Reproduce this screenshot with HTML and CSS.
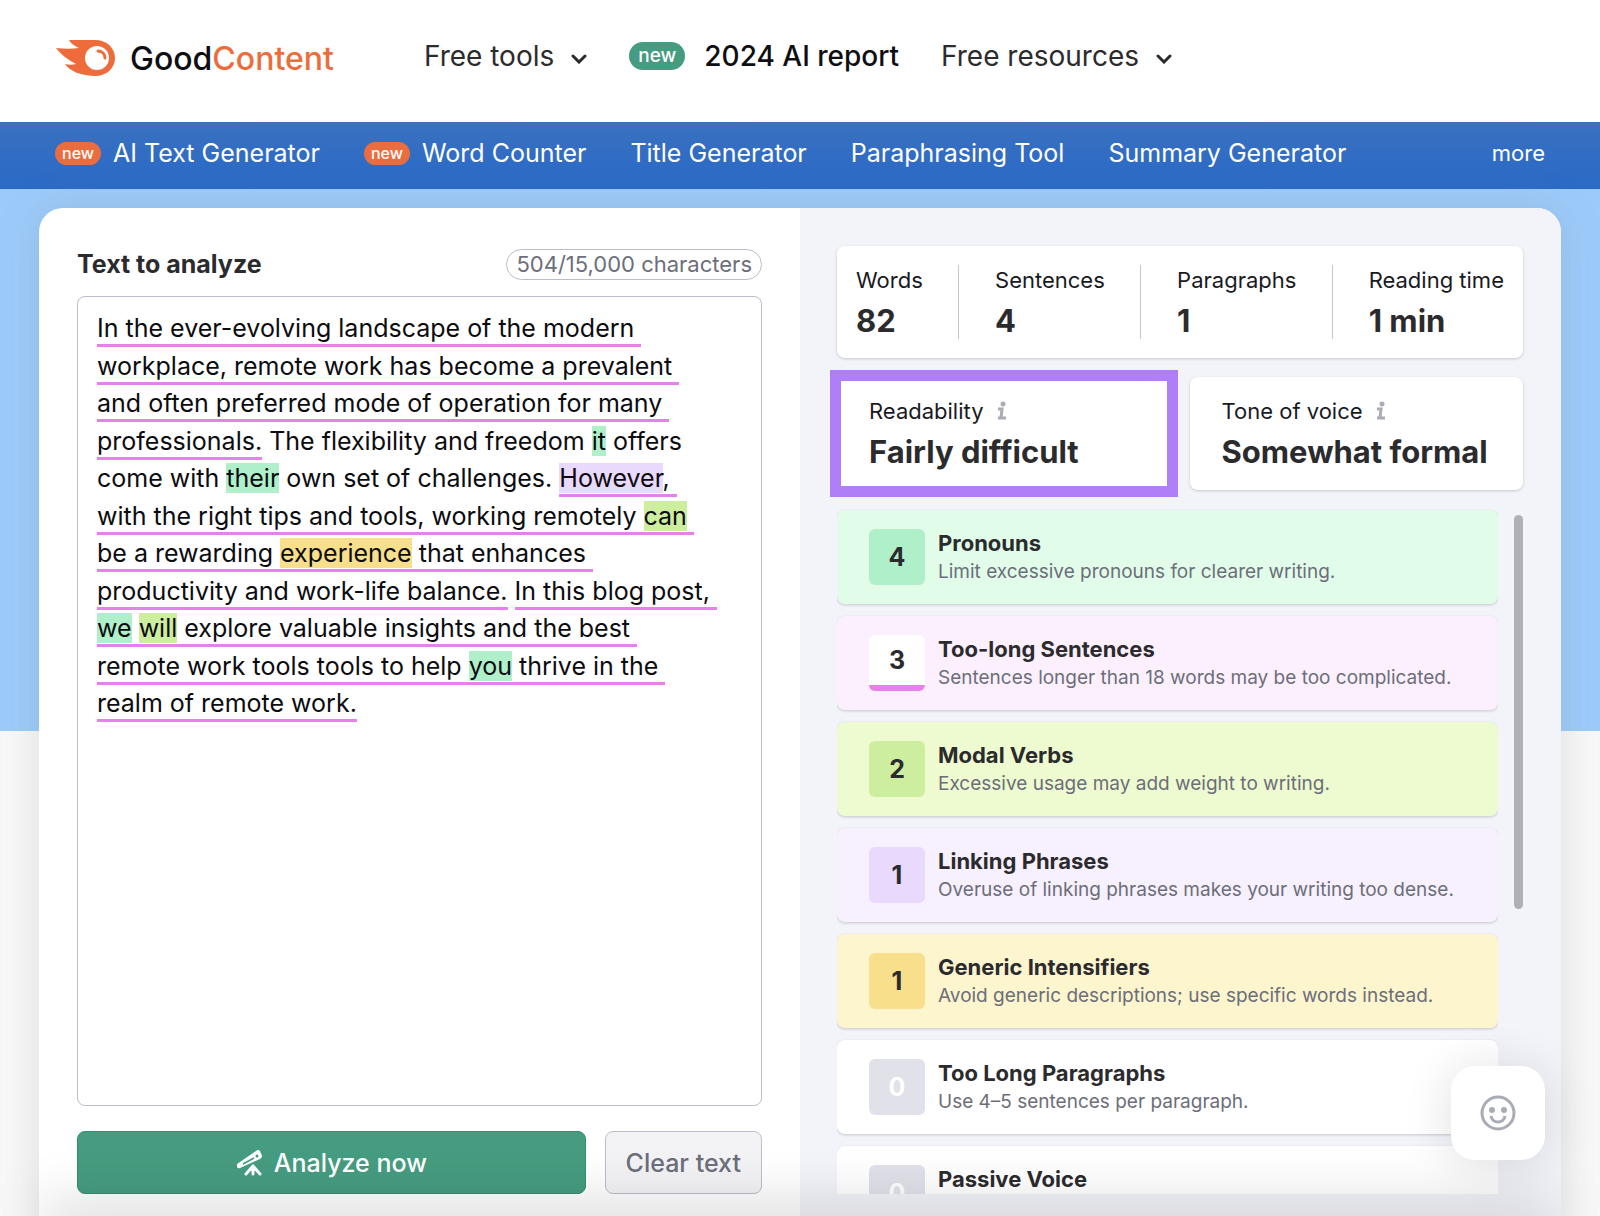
FILE: index.html
```html
<!DOCTYPE html>
<html lang="en">
<head>
  <meta charset="UTF-8">
  <meta name="viewport" content="width=device-width, initial-scale=1.0">
  <title>GoodContent</title>
  <link rel="stylesheet" href="styles.css">
</head>
<body>
  <header class="header">
    <a class="logo" href="#">
      <svg class="logo-icon" width="60" height="36" viewBox="0 0 60 36" aria-hidden="true">
        <path fill="#ee6c3c" d="M13 0H39C51 0 59 8 59 18S51 36 39 36C26 36 13 31 9 24C13 25 17 25 20 24C13 20 6 16 0 8C8 9 16 9 23 8C19 6 15 4 13 0Z"/>
        <circle cx="41" cy="18" r="12" fill="#fff"/>
        <path fill="none" stroke="#ee6c3c" stroke-width="3" stroke-linecap="round" d="M42 11C46 11 49 14 49 18"/>
      </svg>
      <span class="logo-text">Good<span>Content</span></span>
    </a>
    <nav class="main-nav">
      <a href="#">Free tools
        <svg class="chevron" width="16" height="10" viewBox="0 0 16 10" aria-hidden="true"><path d="M2 2L8 8L14 2"/></svg>
      </a>
      <a class="report" href="#"><span class="badge badge-green">new</span>2024 AI report</a>
      <a href="#">Free resources
        <svg class="chevron" width="16" height="10" viewBox="0 0 16 10" aria-hidden="true"><path d="M2 2L8 8L14 2"/></svg>
      </a>
    </nav>
  </header>

  <nav class="tools-nav">
    <a href="#"><span class="badge badge-orange">new</span>AI Text Generator</a>
    <a href="#"><span class="badge badge-orange">new</span>Word Counter</a>
    <a href="#">Title Generator</a>
    <a href="#">Paraphrasing Tool</a>
    <a href="#">Summary Generator</a>
    <a class="more" href="#">more</a>
  </nav>

  <main class="page">
    <div class="panel">
      <section class="editor">
        <div class="editor-head">
          <h2 id="editor-label">Text to analyze</h2>
          <span class="counter">504/15,000 characters</span>
        </div>
        <div class="editor-text" contenteditable="true" role="textbox" aria-multiline="true" aria-labelledby="editor-label" spellcheck="false"><span class="long">In the ever-evolving landscape of the modern workplace, remote work has become a prevalent and often preferred mode of operation for many professionals.</span> The flexibility and freedom <mark class="pronoun">it</mark> offers come with <mark class="pronoun">their</mark> own set of challenges. <span class="long"><mark class="linking">However</mark>, with the right tips and tools, working remotely <mark class="modal">can</mark> be a rewarding <mark class="generic">experience</mark> that enhances productivity and work-life balance.</span> <span class="long">In this blog post, <mark class="pronoun">we</mark> <mark class="modal">will</mark> explore valuable insights and the best remote work tools tools to help <mark class="pronoun">you</mark> thrive in the realm of remote work.</span></div>
        <div class="actions">
          <button class="btn btn-analyze" type="button">
            <svg width="27" height="27" viewBox="0 0 27 27" aria-hidden="true">
              <path fill="#fff" d="M1 15L20 2Q22 0 24 2L26 7Q26 9 24 10L4 19Q2 20 1 18Z"/>
              <path stroke="#469c80" stroke-width="1.5" d="M7 15L18 9"/>
              <circle cx="21" cy="7" r="1.5" fill="#469c80"/>
              <path fill="none" stroke="#fff" stroke-width="3" stroke-linecap="round" d="M17 17L10 25M17 17L24 25M17 17V25"/>
            </svg>
            Analyze now
          </button>
          <button class="btn btn-clear" type="button">Clear text</button>
        </div>
      </section>

      <section class="results">
        <div class="card stats">
          <div><p>Words</p><strong>82</strong></div>
          <i class="divider"></i>
          <div><p>Sentences</p><strong>4</strong></div>
          <i class="divider"></i>
          <div><p>Paragraphs</p><strong>1</strong></div>
          <i class="divider"></i>
          <div><p>Reading time</p><strong>1 min</strong></div>
        </div>

        <div class="scores">
          <div class="card score selected">
            <p>Readability
              <svg class="info" width="12" height="20" viewBox="0 0 12 20" aria-hidden="true"><circle cx="7" cy="3" r="2.5"/><path d="M2 8H6L5 17M2 17H10"/></svg>
            </p>
            <strong>Fairly difficult</strong>
          </div>
          <div class="card score">
            <p>Tone of voice
              <svg class="info" width="12" height="20" viewBox="0 0 12 20" aria-hidden="true"><circle cx="7" cy="3" r="2.5"/><path d="M2 8H6L5 17M2 17H10"/></svg>
            </p>
            <strong>Somewhat formal</strong>
          </div>
        </div>

        <div class="issues">
          <ul class="issue-list">
            <li class="card issue issue-pronoun">
              <span class="count">4</span>
              <div><h3>Pronouns</h3><p>Limit excessive pronouns for clearer writing.</p></div>
            </li>
            <li class="card issue issue-long">
              <span class="count">3</span>
              <div><h3>Too-long Sentences</h3><p>Sentences longer than 18 words may be too complicated.</p></div>
            </li>
            <li class="card issue issue-modal">
              <span class="count">2</span>
              <div><h3>Modal Verbs</h3><p>Excessive usage may add weight to writing.</p></div>
            </li>
            <li class="card issue issue-linking">
              <span class="count">1</span>
              <div><h3>Linking Phrases</h3><p>Overuse of linking phrases makes your writing too dense.</p></div>
            </li>
            <li class="card issue issue-generic">
              <span class="count">1</span>
              <div><h3>Generic Intensifiers</h3><p>Avoid generic descriptions; use specific words instead.</p></div>
            </li>
            <li class="card issue">
              <span class="count">0</span>
              <div><h3>Too Long Paragraphs</h3><p>Use 4–5 sentences per paragraph.</p></div>
            </li>
            <li class="card issue">
              <span class="count">0</span>
              <div><h3>Passive Voice</h3></div>
            </li>
          </ul>
          <div class="scrollbar"><div class="thumb"></div></div>
        </div>
      </section>
    </div>
  </main>

  <div class="bottom-shade"></div>

  <button class="feedback" type="button" aria-label="Feedback">
    <svg width="36" height="36" viewBox="0 0 36 36" aria-hidden="true">
      <circle cx="18" cy="18" r="16" fill="none" stroke="#a9abb6" stroke-width="3"/>
      <circle cx="12" cy="15" r="3" fill="#a9abb6"/>
      <circle cx="24" cy="15" r="3" fill="#a9abb6"/>
      <path fill="none" stroke="#a9abb6" stroke-width="3" d="M11 21C12 29 24 29 25 21"/>
    </svg>
  </button>
</body>
</html>
```

FILE: styles.css
```css
* {
  box-sizing: border-box;
}
body {
  display: flex;
  flex-direction: column;
  height: 100vh;
  margin: 0;
  overflow: hidden;
  background: #fff;
  color: #2b2b2e;
  font-family: Inter, "Liberation Sans", sans-serif;
}
h2, h3, p, ul {
  margin: 0;
  padding: 0;
}
a {
  color: inherit;
  text-decoration: none;
}
button {
  font-family: inherit;
  cursor: pointer;
}

/* header */
.header {
  display: flex;
  align-items: center;
  gap: 90px;
  height: 122px;
  padding: 0 56px 10px;
}
.logo {
  display: flex;
  align-items: center;
  gap: 14px;
  padding-top: 4px;
}
.logo-text {
  color: #0e0f14;
  font-size: 32px;
  font-weight: 500;
}
.logo-text span {
  color: #ee6c3c;
}
.main-nav {
  display: flex;
  align-items: center;
  gap: 42px;
  color: #2b2b2e;
  font-size: 28px;
}
.main-nav a {
  display: flex;
  align-items: center;
  gap: 17px;
}
.main-nav .report {
  gap: 19px;
  color: #0e0f14;
  font-weight: 500;
}
.chevron {
  margin-top: 6px;
  fill: none;
  stroke: #2b2b2e;
  stroke-width: 3;
  stroke-linecap: round;
}
.badge {
  border-radius: 14px;
  color: #fff;
  font-weight: 500;
}
.badge-green {
  padding: 0 9px;
  background: #469c80;
  font-size: 19px;
  line-height: 28px;
}
.badge-orange {
  padding: 0 7px;
  background: #ea6d40;
  font-size: 16px;
  line-height: 23px;
}

/* blue bar */
.tools-nav {
  display: flex;
  align-items: center;
  gap: 44px;
  height: 67px;
  padding: 0 55px 5px;
  background: linear-gradient(#3b71be, #2f6cc5 60%, #2b6bc6);
  color: #fff;
  font-size: 25px;
}
.tools-nav a {
  display: flex;
  align-items: center;
  gap: 12px;
}
.tools-nav .more {
  margin-left: auto;
  font-size: 22px;
}

/* tool panel */
.page {
  display: flex;
  flex: 1;
  min-height: 0;
  padding: 19px 39px 0;
  background: linear-gradient(#9ccbfb 542px, #f8f8f8 542px);
}
.panel {
  display: grid;
  flex: 1;
  grid-template-columns: 1fr 1fr;
  min-width: 0;
  border-radius: 24px 24px 0 0;
  overflow: hidden;
  background: #fff;
  box-shadow: 0 0 40px rgba(130, 130, 130, 0.22);
}
.editor {
  display: flex;
  flex-direction: column;
  padding: 38px 38px 22px;
}
.editor-head {
  display: flex;
  align-items: center;
  justify-content: space-between;
  height: 36px;
  margin-bottom: 14px;
}
.editor-head h2 {
  font-size: 25px;
  font-weight: 700;
}
.counter {
  padding: 0 9px;
  border: 1px solid #bcbdca;
  border-radius: 16px;
  color: #6c6e79;
  font-size: 22px;
  line-height: 29px;
}
.editor-text {
  flex: 1;
  margin-bottom: 25px;
  padding: 13px 44px 13px 19px;
  border: 1px solid #bcbdca;
  border-radius: 8px;
  color: #0c0c10;
  font-size: 25px;
  line-height: 1.5;
  white-space: pre-wrap;
}
.long {
  padding-bottom: 1px;
  border-bottom: 3px solid #e681ec;
}
mark {
  color: inherit;
}
.pronoun {
  background: #aff0cb;
}
.linking {
  background: #e9d9fc;
}
.modal {
  background: #cded9f;
}
.generic {
  background: #f7df8c;
}
.actions {
  display: flex;
  gap: 19px;
}
.btn {
  display: flex;
  align-items: center;
  justify-content: center;
  gap: 11px;
  height: 63px;
  padding: 0 20px;
  border: 1px solid #bcbdca;
  border-radius: 8px;
  font-size: 25px;
  font-weight: 500;
}
.btn-analyze {
  flex: 1;
  border-color: #2f9070;
  background: #469c80;
  color: #fff;
}
.btn-clear {
  background: #f3f3f6;
  color: #6c6e79;
}

/* results */
.results {
  display: flex;
  flex-direction: column;
  gap: 19px;
  min-height: 0;
  padding: 38px 38px 22px 37px;
  background: #f3f4f9;
}
.card {
  border-radius: 8px;
  background: #fff;
  box-shadow: 0 1px 3px rgba(25, 27, 35, 0.2);
}
.card p {
  color: #191a1f;
  font-size: 22px;
  line-height: 30px;
}
.card strong {
  display: block;
  font-size: 31px;
  font-weight: 700;
  line-height: 40px;
}
.stats {
  display: flex;
  justify-content: space-between;
  padding: 19px;
}
.divider {
  width: 1px;
  background: #c4c7cf;
}
.stats > div {
  height: 74px;
}
.stats strong,
.score strong {
  margin-top: 6px;
}
.scores {
  display: grid;
  grid-template-columns: 1fr 1fr;
  gap: 19px;
}
.score {
  padding: 19px 32px 18px;
}
.score p {
  display: flex;
  align-items: center;
  gap: 12px;
}
.selected {
  outline: 11px solid #b07ff7;
  outline-offset: -4px;
  border-radius: 0;
}
.info {
  fill: #a9abb6;
}
.info path {
  fill: none;
  stroke: #a9abb6;
  stroke-width: 3;
}
.issues {
  display: flex;
  flex: 1;
  gap: 16px;
  min-height: 0;
}
.issue-list {
  display: flex;
  flex: 1;
  flex-direction: column;
  gap: 12px;
  padding-top: 1px;
  overflow: hidden;
  list-style: none;
}
.issue {
  display: flex;
  flex-shrink: 0;
  align-items: center;
  gap: 13px;
  height: 94px;
  padding: 0 32px;
}
.issue > div {
  height: 58px;
}
.issue h3 {
  font-size: 22px;
  font-weight: 700;
  line-height: 30px;
}
.issue p {
  color: #6c6e79;
  font-size: 19px;
  line-height: 28px;
}
.count {
  display: flex;
  align-items: center;
  justify-content: center;
  width: 56px;
  height: 56px;
  border-radius: 6px;
  background: #e0e1e9;
  color: #fff;
  font-size: 25px;
  font-weight: 700;
}
.issue-pronoun {
  background: #e1fce9;
}
.issue-pronoun .count {
  background: #aff0cb;
  color: #2b2b2e;
}
.issue-long {
  background: #fcf0fe;
}
.issue-long .count {
  border-bottom: 6px solid #e681ec;
  background: #fff;
  color: #2b2b2e;
}
.issue-modal {
  background: #eefbd0;
}
.issue-modal .count {
  background: #cded9f;
  color: #2b2b2e;
}
.issue-linking {
  background: #f7f0fe;
}
.issue-linking .count {
  background: #e9d9fc;
  color: #2b2b2e;
}
.issue-generic {
  background: #fcf5cd;
}
.issue-generic .count {
  background: #f7df8c;
  color: #2b2b2e;
}
.scrollbar {
  width: 9px;
  padding-top: 6px;
}
.thumb {
  height: 58%;
  border-radius: 5px;
  background: #b0b1b7;
}

/* things over the page */
.bottom-shade {
  position: fixed;
  right: 48px;
  bottom: -20px;
  left: 48px;
  height: 20px;
  box-shadow: 0 0 60px 6px rgba(0, 0, 0, 0.22);
  pointer-events: none;
}
.feedback {
  position: fixed;
  right: 55px;
  bottom: 56px;
  display: flex;
  align-items: center;
  justify-content: center;
  width: 94px;
  height: 94px;
  border: 0;
  border-radius: 24px;
  background: #fff;
  box-shadow: 0 4px 48px rgba(25, 27, 35, 0.14);
}
```
